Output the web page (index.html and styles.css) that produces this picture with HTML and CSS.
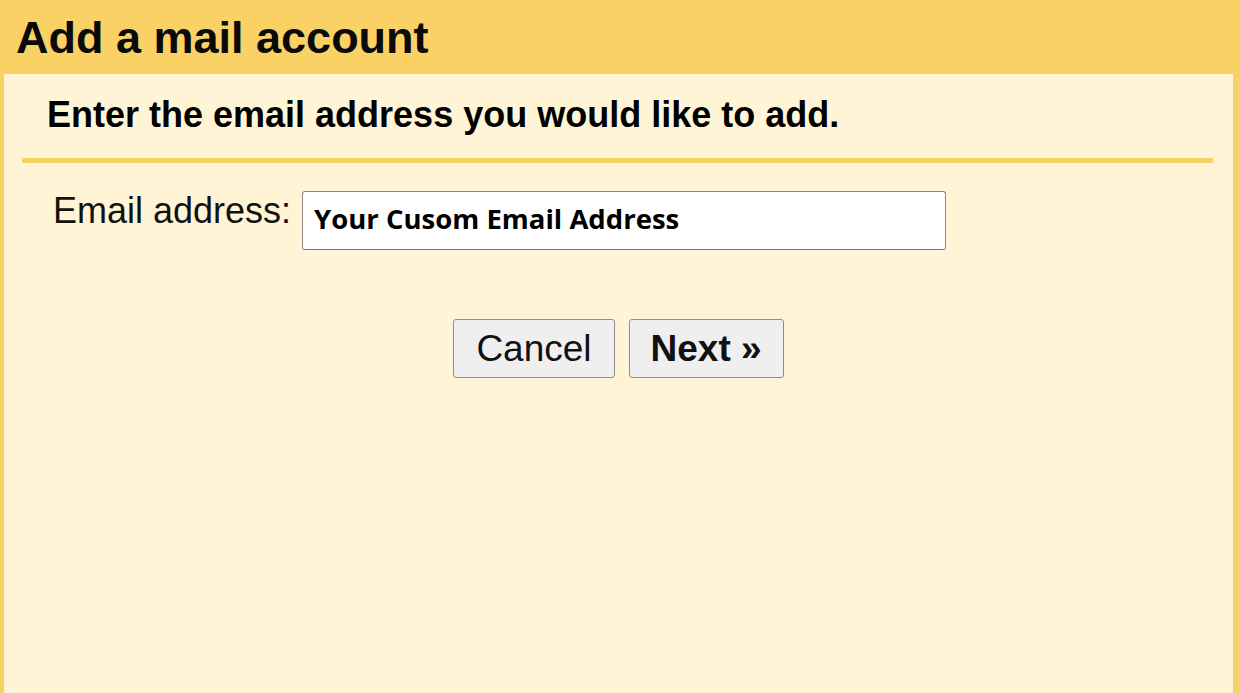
FILE: index.html
```html
<!DOCTYPE html>
<html>
<head>
<meta charset="utf-8">
<link rel="stylesheet" href="styles.css">
</head>
<body>
<div class="header"><h1 class="title">Add a mail account</h1></div>
<div class="panel">
  <h2 class="subtitle">Enter the email address you would like to add.</h2>
  <div class="divider"></div>
  <div class="row">
    <label class="label" for="email">Email address:</label>
    <input class="input" id="email" type="text" value="Your Cusom Email Address">
  </div>
  <div class="actions">
    <button class="btn btn-cancel">Cancel</button>
    <button class="btn btn-next">Next »</button>
  </div>
</div>
</body>
</html>
```
FILE: styles.css
```css
html, body {
  margin: 0;
  padding: 0;
}
body {
  width: 1240px;
  height: 693px;
  overflow: hidden;
  background: #fad165;
  font-family: "Liberation Sans", Arial, sans-serif;
  color: #000;
}
.header {
  height: 74px;
  box-sizing: border-box;
  padding: 15px 0 0 16px;
}
.title {
  margin: 0;
  font-size: 45px;
  line-height: 45px;
  font-weight: bold;
  color: #0a0a0a;
}
.panel {
  margin: 0 7px 0 4px;
  height: 619px;
  background: #fff5d6;
  overflow: hidden;
}
.subtitle {
  margin: 0;
  padding: 23px 0 0 43px;
  font-size: 36px;
  line-height: 36px;
  font-weight: bold;
}
.divider {
  margin: 25px 20px 0 18px;
  height: 5px;
  background: #fad165;
}
.row {
  display: flex;
  align-items: flex-start;
  margin-top: 28px;
  padding-left: 49px;
}
.label {
  font-size: 36px;
  line-height: 36px;
  padding-top: 2px;
  margin-right: 11px;
  color: #111;
}
.input {
  width: 644px;
  height: 59px;
  box-sizing: border-box;
  margin: 0;
  padding: 0 0 4px 11px;
  border: 1px solid #8a8a8a;
  border-bottom-color: #7a7a7a;
  border-radius: 3px;
  background: #fff;
  font-family: "Open Sans", "Noto Sans", sans-serif;
  font-weight: bold;
  font-size: 27.5px;
  color: #000;
  outline: none;
}
.actions {
  display: flex;
  justify-content: center;
  gap: 14px;
  margin-top: 69px;
}
.btn {
  height: 59px;
  box-sizing: border-box;
  margin: 0;
  border: 1px solid #8e8e8e;
  border-radius: 3px;
  background: #efefef;
  font-family: "Liberation Sans", Arial, sans-serif;
  font-size: 37px;
  color: #111;
  cursor: pointer;
}
.btn-cancel {
  padding: 0 22px;
}
.btn-next {
  font-weight: bold;
  padding: 0 21px;
}
```
